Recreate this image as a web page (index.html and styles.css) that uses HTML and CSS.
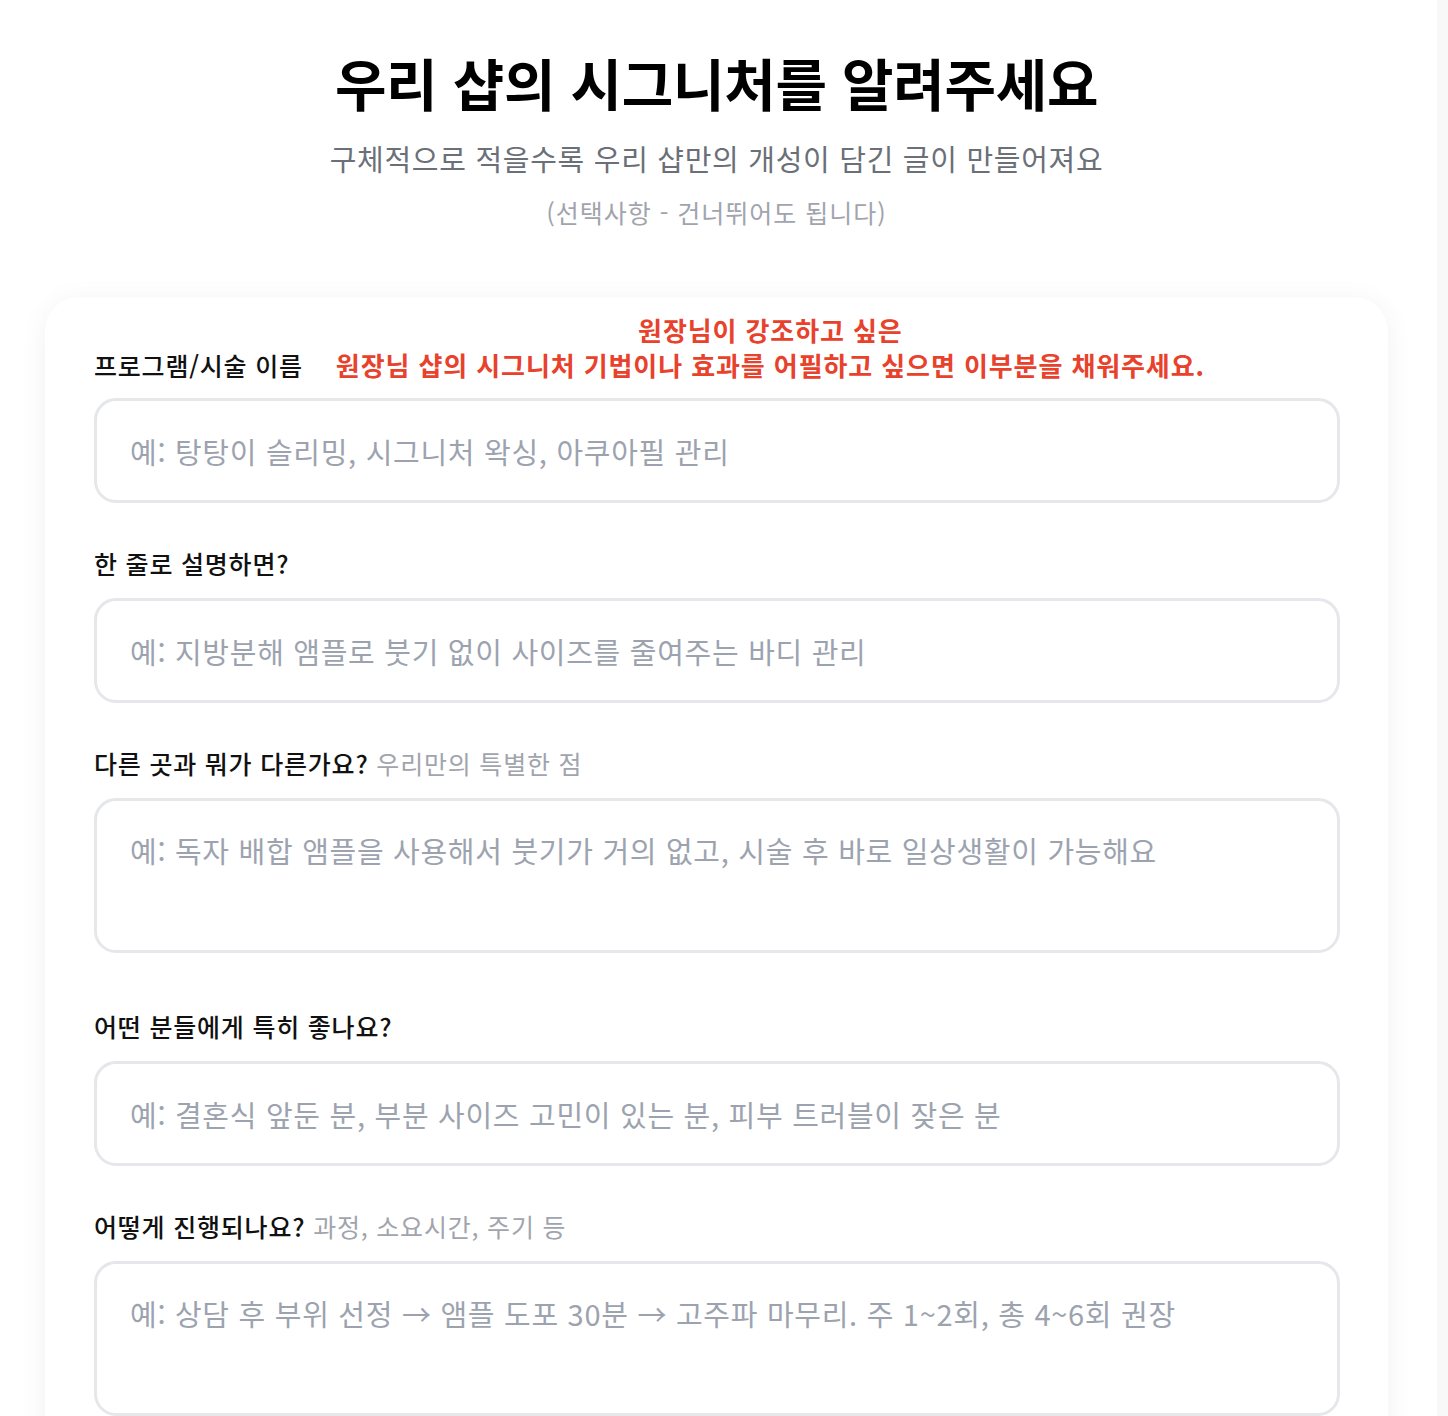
FILE: index.html
```html
<!DOCTYPE html>
<html lang="ko">
<head>
<meta charset="utf-8">
<title>우리 샵의 시그니처를 알려주세요</title>
<link rel="stylesheet" href="styles.css">
</head>
<body>
<div class="page">
  <header class="head">
    <h1 class="title">우리 샵의 시그니처를 알려주세요</h1>
    <p class="subtitle">구체적으로 적을수록 우리 샵만의 개성이 담긴 글이 만들어져요</p>
    <p class="optional">(선택사항 - 건너뛰어도 됩니다)</p>
  </header>
  <section class="card">
    <div class="field">
      <div class="label-row">
        <label class="label" for="f1">프로그램/시술 이름</label>
        <div class="note">원장님이 강조하고 싶은<br>원장님 샵의 시그니처 기법이나 효과를 어필하고 싶으면 이부분을 채워주세요.</div>
      </div>
      <input id="f1" class="input" type="text" placeholder="예: 탕탕이 슬리밍, 시그니처 왁싱, 아쿠아필 관리">
    </div>
    <div class="field">
      <label class="label" for="f2">한 줄로 설명하면?</label>
      <input id="f2" class="input" type="text" placeholder="예: 지방분해 앰플로 붓기 없이 사이즈를 줄여주는 바디 관리">
    </div>
    <div class="field field-area">
      <label class="label" for="f3">다른 곳과 뭐가 다른가요? <span class="hint">우리만의 특별한 점</span></label>
      <textarea id="f3" class="input area" placeholder="예: 독자 배합 앰플을 사용해서 붓기가 거의 없고, 시술 후 바로 일상생활이 가능해요"></textarea>
    </div>
    <div class="field">
      <label class="label" for="f4">어떤 분들에게 특히 좋나요?</label>
      <input id="f4" class="input" type="text" placeholder="예: 결혼식 앞둔 분, 부분 사이즈 고민이 있는 분, 피부 트러블이 잦은 분">
    </div>
    <div class="field field-area">
      <label class="label" for="f5">어떻게 진행되나요? <span class="hint">과정, 소요시간, 주기 등</span></label>
      <textarea id="f5" class="input area" placeholder="예: 상담 후 부위 선정 → 앰플 도포 30분 → 고주파 마무리. 주 1~2회, 총 4~6회 권장"></textarea>
    </div>
  </section>
</div>
</body>
</html>
```
FILE: styles.css
```css
html {
  background: #f8f8f9;
}
body {
  margin: 0;
  width: 1437px;
  min-height: 1416px;
  background: #ffffff;
  font-family: "Noto Sans CJK KR", "Noto Sans", sans-serif;
  color: #111111;
}
.page {
  padding: 0 0 0 45px;
}
.head {
  width: 1343px;
  text-align: center;
  padding-top: 44px;
}
.title {
  margin: 0;
  font-size: 56px;
  line-height: 76px;
  font-weight: 700;
  letter-spacing: -0.3px;
  color: #000000;
}
.subtitle {
  margin: 18px 0 0;
  font-size: 29px;
  line-height: 40px;
  letter-spacing: 0.7px;
  color: #6b6f78;
  font-weight: 400;
}
.optional {
  margin: 17px 0 0;
  font-size: 25px;
  line-height: 34px;
  letter-spacing: 1px;
  color: #a1a4ad;
}
.card {
  margin-top: 68px;
  width: 1343px;
  box-sizing: border-box;
  background: #ffffff;
  border-radius: 34px;
  box-shadow: 0 4px 28px rgba(0, 0, 0, 0.06);
  padding: 15px 48px 40px 49px;
  min-height: 1200px;
}
.field {
  display: flex;
  flex-direction: column;
  margin-bottom: 43px;
}
.field-area {
  margin-bottom: 56px;
}
.label-row {
  display: flex;
  align-items: flex-end;
  gap: 33px;
  margin-bottom: 16px;
}
.label {
  display: block;
  font-size: 25px;
  line-height: 34px;
  font-weight: 500;
  letter-spacing: 0.8px;
  color: #111111;
  margin-bottom: 18px;
}
.label-row .label {
  margin-bottom: 0;
}
.hint {
  font-weight: 400;
  color: #a1a4ad;
}
.note {
  color: #e8412c;
  font-size: 26px;
  line-height: 35px;
  font-weight: 700;
  text-align: center;
  letter-spacing: 0.9px;
}
.input {
  display: block;
  width: 100%;
  box-sizing: border-box;
  height: 105px;
  border: 3px solid #e5e7eb;
  border-radius: 22px;
  padding: 27px 33px;
  font-family: "Noto Sans CJK KR", "Noto Sans", sans-serif;
  font-size: 29px;
  line-height: 44px;
  letter-spacing: 0.7px;
  color: #111111;
  background: #ffffff;
  outline: none;
  margin: 0;
}
.input::placeholder {
  color: #9ca3af;
}
.area {
  height: 155px;
  resize: none;
}
```
